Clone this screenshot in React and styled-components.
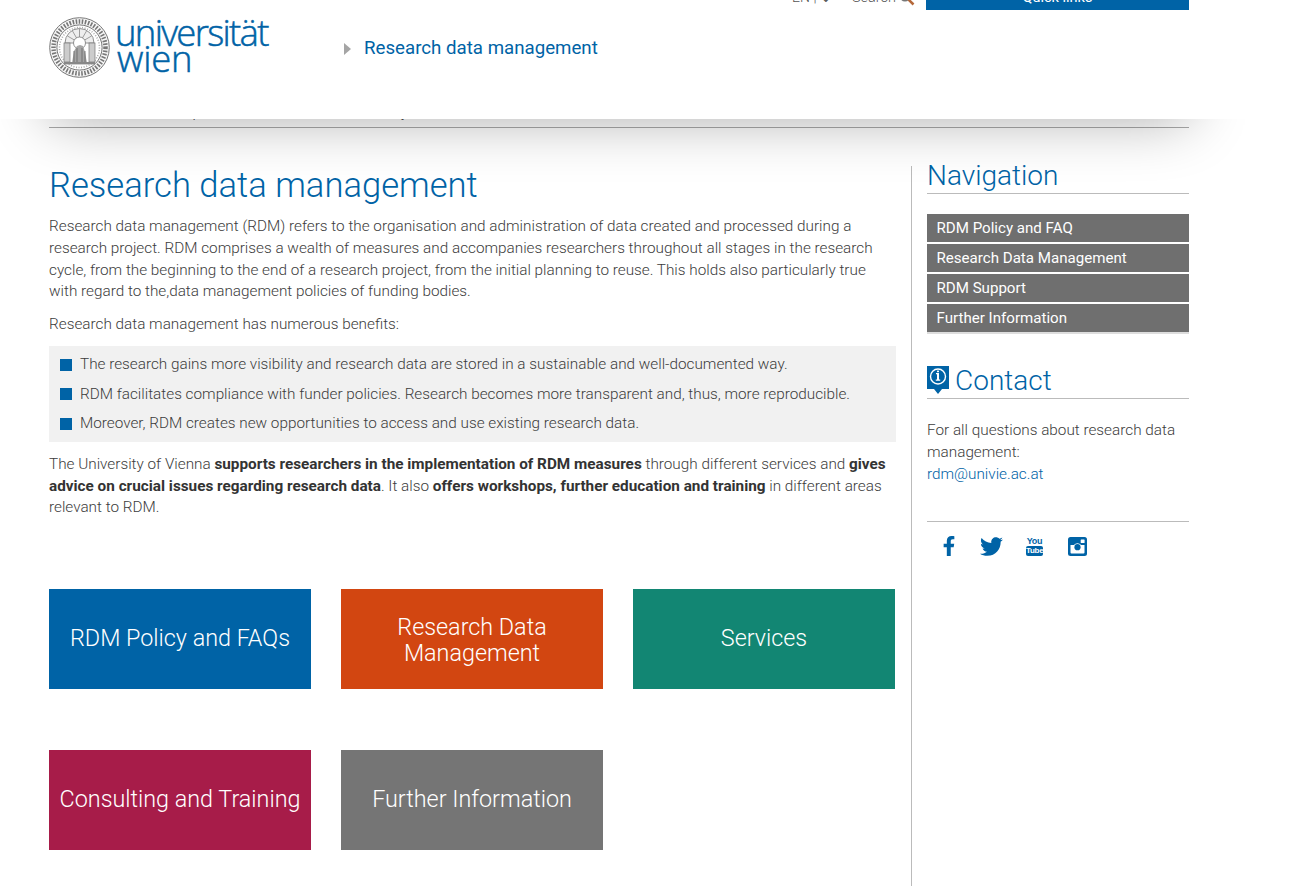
import React from "react";
import styled, { createGlobalStyle } from "styled-components";
import { FaFacebookF, FaTwitter } from "react-icons/fa";

const BLUE = "#0063a6";

const Global = createGlobalStyle`
  html, body { margin: 0; padding: 0; background: #fff; }
  body { font-family: Roboto, "Liberation Sans", sans-serif; font-weight: 300; font-size: 15.3px; line-height: 21.75px; color: #3c3c3c; overflow: hidden; }
  * { box-sizing: border-box; }
`;

const Page = styled.div`
  position: relative;
  width: 1289px;
  height: 886px;
  overflow: hidden;
`;

const Header = styled.header`
  position: absolute;
  top: 0;
  left: 0;
  width: 100%;
  height: 119px;
  z-index: 2;
  &::before {
    content: "";
    position: absolute;
    left: 49px;
    right: 100px;
    top: 0;
    height: 119px;
    box-shadow: 0 0 60px rgba(0, 0, 0, 0.33);
  }
`;

const HeaderInner = styled.div`
  position: relative;
  height: 119px;
  background: #fff;
  padding: 0 100px 0 49px;
  overflow: hidden;
`;

const TopBar = styled.div`
  display: flex;
  justify-content: flex-end;
  align-items: stretch;
  height: 30px;
  margin-top: -20px;
`;

const TopLink = styled.span`
  display: inline-flex;
  align-items: center;
  gap: 3px;
  margin-right: ${(p) => p.$gap}px;
  height: 30px;
  padding-top: 6px;
  font-size: ${(p) => p.$size}px;
  font-weight: 300;
  color: #555;
`;

const QuickLinks = styled.div`
  width: 263px;
  height: 30px;
  padding-top: 6px;
  background: ${BLUE};
  color: #fff;
  font-size: 14.5px;
  font-weight: 400;
  line-height: 30px;
  text-align: center;
  display: flex;
  align-items: center;
  justify-content: center;
`;

const Brand = styled.div`
  display: flex;
  align-items: flex-start;
  padding-top: 7px;
`;

const Seal = styled.svg`
  width: 61px;
  height: 61px;
  flex: none;
`;

const Wordmark = styled.div`
  width: 156px;
  margin-left: 5px;
  flex: none;
  font-family: "Open Sans", sans-serif;
  font-weight: 300;
  font-size: 36.5px;
  line-height: 26px;
  color: ${BLUE};
  padding-top: 2px;
  -webkit-text-stroke: 0.5px ${BLUE};
`;

const WordmarkLine = styled.div`
  padding-left: ${(p) => p.$indent || 0}px;
  letter-spacing: ${(p) => p.$spacing}px;
  white-space: nowrap;
`;

const SiteName = styled.div`
  display: flex;
  align-items: center;
  height: 28px;
  margin: 18px 0 0 73px;
  gap: 13px;
  font-size: 18.7px;
  font-weight: 400;
  color: ${BLUE};
  white-space: nowrap;
`;

const Arrow = styled.span`
  width: 0;
  height: 0;
  border-style: solid;
  border-width: 6.5px 0 6.5px 7px;
  border-color: transparent transparent transparent #a5a5a5;
`;

const Breadcrumb = styled.nav`
  margin: 0 100px 0 49px;
  height: 128px;
  padding-top: 102px;
  border-bottom: 1px solid #aaa;
  white-space: nowrap;
  color: #333;
`;

const Columns = styled.div`
  display: flex;
  padding: 37px 100px 0 49px;
`;

const Main = styled.main`
  width: 847px;
  flex: none;
`;

const Title = styled.h1`
  margin: 0;
  font-size: 34.6px;
  font-weight: 300;
  line-height: 40px;
  color: ${BLUE};
`;

const Para = styled.p`
  margin: ${(p) => p.$top || 0}px 0 0;
  width: ${(p) => p.$width || 847}px;
`;

const Strong = styled.strong`
  font-weight: 700;
  color: #333;
`;

const BulletBox = styled.ul`
  list-style: none;
  margin: 10px 0 0;
  padding: 8px 0 7px 11px;
  height: 96px;
  background: #f1f1f1;
  display: flex;
  flex-direction: column;
  gap: 8px;
`;

const Bullet = styled.li`
  display: flex;
  align-items: center;
  gap: 8px;
  white-space: nowrap;
  &::before {
    content: "";
    width: 12px;
    height: 12px;
    background: ${BLUE};
    flex: none;
  }
`;

const Tiles = styled.div`
  display: grid;
  grid-template-columns: repeat(3, 262px);
  grid-auto-rows: 100px;
  column-gap: 30px;
  row-gap: 61px;
  margin-top: 70px;
`;

const Tile = styled.a`
  display: flex;
  align-items: center;
  justify-content: center;
  text-align: center;
  padding: ${(p) => (p.$twoLines ? "1px 10px 0" : "0 10px 2px")};
  background: ${(p) => p.$bg};
  color: #fff;
  font-size: 23.35px;
  font-weight: 300;
  line-height: 26px;
`;

const Side = styled.aside`
  margin-left: 15px;
  margin-top: 1px;
  width: 278px;
  height: 720px;
  border-left: 1px solid #bbb;
  padding-left: 15px;
`;

const SideHeading = styled.h2`
  display: flex;
  align-items: flex-end;
  gap: 6px;
  margin: ${(p) => p.$top || 0}px 0 0;
  height: ${(p) => p.$h}px;
  border-bottom: 1px solid #bbb;
  font-size: 28px;
  font-weight: 300;
  line-height: 34px;
  color: ${BLUE};
`;

const ContactIcon = styled.svg`
  width: 22px;
  height: 29px;
  flex: none;
  margin-bottom: 3px;
`;

const NavList = styled.div`
  margin-top: 20px;
  display: flex;
  flex-direction: column;
  gap: 2px;
  background: #fff;
  border-bottom: 2px solid #ddd;
`;

const NavItem = styled.a`
  display: block;
  height: 28px;
  padding-left: 9.5px;
  background: #6f6f6f;
  color: #fff;
  font-size: 15.1px;
  font-weight: 400;
  line-height: 29px;
`;

const SideText = styled.p`
  margin: 21px 0 0;
`;

const MailLink = styled.a`
  color: ${BLUE};
  display: block;
`;

const Social = styled.div`
  margin-top: 36px;
  border-top: 1px solid #bbb;
  padding: 13px 0 0 12px;
  display: flex;
  align-items: center;
  color: ${BLUE};
`;

const SocialSlot = styled.span`
  width: ${(p) => p.$w}px;
  height: 22px;
  display: flex;
  align-items: center;
  font-size: ${(p) => p.$size}px;
`;

const TubeStack = styled.span`
  display: flex;
  flex-direction: column;
  align-items: center;
  width: 17px;
  font-family: "Liberation Sans", sans-serif;
  font-weight: 700;
  font-size: 9px;
  line-height: 9px;
  letter-spacing: -0.3px;
  color: ${BLUE};
`;

const TubeBadge = styled.span`
  display: block;
  width: 17px;
  height: 10px;
  border-radius: 2px;
  background: ${BLUE};
  color: #fff;
  font-size: 8px;
  text-align: center;
  line-height: 10px;
`;

function SealMark() {
  return (
    <Seal viewBox="0 0 61 61">
      <circle cx="30.5" cy="30.5" r="29.8" fill="#f6f6f6" stroke="#777" strokeWidth="1" />
      <circle cx="30.5" cy="30.5" r="26" fill="none" stroke="#777" strokeWidth="4.5" strokeDasharray="1.6 1.5" />
      <circle cx="30.5" cy="30.5" r="22.6" fill="#fff" stroke="#777" strokeWidth="1" />
      <circle cx="30.5" cy="30.5" r="20" fill="none" stroke="#aaa" strokeWidth="1.6" strokeDasharray="1 1.6" />
      <path d="M16 26a14.5 14.5 0 0 1 29 0z" fill="#eee" stroke="#777" strokeWidth=".8" />
      <path d="M30.5 26v-14M30.5 26l-7-12M30.5 26l7-12M30.5 26l-12-7M30.5 26l12-7" stroke="#888" strokeWidth=".8" />
      <circle cx="30.5" cy="26" r="6" fill="#fff" stroke="#777" strokeWidth=".8" />
      <rect x="15" y="26" width="6" height="19" fill="#ccc" stroke="#777" strokeWidth=".7" />
      <rect x="40" y="26" width="6" height="19" fill="#ccc" stroke="#777" strokeWidth=".7" />
      <path d="M23 46l2-12 3-5 3-1 3 1 2 6 2 11z" fill="#a5a5a5" />
      <path d="M25 46V34M36 46V34M28 46V31M33 46V31" stroke="#666" strokeWidth=".8" />
      <path d="M15 45h31v2.4H15z" fill="#888" />
    </Seal>
  );
}

function InstagramMark() {
  return (
    <svg width="19" height="19" viewBox="0 0 19 19">
      <rect width="19" height="19" rx="2.5" fill={BLUE} />
      <path d="M2.5 8h3.4a4.4 4.4 0 0 1 7.2 0h3.4v7.5a1 1 0 0 1-1 1H3.5a1 1 0 0 1-1-1z" fill="#fff" />
      <circle cx="9.5" cy="10.2" r="3.1" fill={BLUE} />
      <rect x="12.7" y="2.4" width="3.9" height="3.6" rx=".6" fill="#fff" />
    </svg>
  );
}

export default function App() {
  return (
    <Page>
      <Global />
      <Header>
        <HeaderInner>
          <TopBar>
            <TopLink $gap={20} $size={14}>EN | ⌄</TopLink>
            <TopLink $gap={11} $size={14.5}>
              Search
              <svg width="16" height="16" viewBox="0 0 16 16">
                <circle cx="6" cy="6" r="4.5" fill="none" stroke="#777" strokeWidth="2" />
                <path d="M9.5 9.5l5 5" stroke="#b5683a" strokeWidth="2.5" />
              </svg>
            </TopLink>
            <QuickLinks>Quick links</QuickLinks>
          </TopBar>
          <Brand>
            <SealMark />
            <Wordmark>
              <WordmarkLine $spacing={-1.7}>universität</WordmarkLine>
              <WordmarkLine $indent={2} $spacing={-0.2}>wien</WordmarkLine>
            </Wordmark>
            <SiteName>
              <Arrow />
              Research data management
            </SiteName>
          </Brand>
        </HeaderInner>
      </Header>
      <Breadcrumb>Home Research Groups · Information and Arts Library</Breadcrumb>
      <Columns>
        <Main>
          <Title>Research data management</Title>
          <Para $top={11} $width={835}>
            Research data management (RDM) refers to the organisation and administration of data created and processed during a research project. RDM comprises a wealth of measures and accompanies researchers throughout all stages in the research cycle, from the beginning to the end of a research project, from the initial planning to reuse. This holds also particularly true with regard to the,data management policies of funding bodies.
          </Para>
          <Para $top={11}>Research data management has numerous benefits:</Para>
          <BulletBox>
            <Bullet>The research gains more visibility and research data are stored in a sustainable and well-documented way.</Bullet>
            <Bullet>RDM facilitates compliance with funder policies. Research becomes more transparent and, thus, more reproducible.</Bullet>
            <Bullet>Moreover, RDM creates new opportunities to access and use existing research data.</Bullet>
          </BulletBox>
          <Para $top={12} $width={845}>
            The University of Vienna <Strong>supports researchers in the implementation of RDM measures</Strong> through different services and <Strong>gives advice on crucial issues regarding research data</Strong>. It also <Strong>offers workshops, further education and training</Strong> in different areas relevant to RDM.
          </Para>
          <Tiles>
            <Tile $bg="#0063a6">RDM Policy and FAQs</Tile>
            <Tile $bg="#d24611" $twoLines>Research Data Management</Tile>
            <Tile $bg="#128673">Services</Tile>
            <Tile $bg="#a71c49">Consulting and Training</Tile>
            <Tile $bg="#757575">Further Information</Tile>
          </Tiles>
        </Main>
        <Side>
          <SideHeading $h={28}>Navigation</SideHeading>
          <NavList>
            <NavItem>RDM Policy and FAQ</NavItem>
            <NavItem>Research Data Management</NavItem>
            <NavItem>RDM Support</NavItem>
            <NavItem>Further Information</NavItem>
          </NavList>
          <SideHeading $top={31} $h={34}>
            <ContactIcon viewBox="0 0 22 29">
              <path d="M0 0h22v23h-7l-4 5-4-5H0z" fill={BLUE} />
              <circle cx="11" cy="10.5" r="7.5" fill="none" stroke="#fff" strokeWidth="1.4" />
              <path d="M9 7h3v6.5h1.2v1.3H8.8v-1.3H10V8.2H9z" fill="#fff" />
              <rect x="10" y="4.6" width="2" height="1.6" fill="#fff" />
            </ContactIcon>
            Contact
          </SideHeading>
          <SideText>
            For all questions about research data management:
            <MailLink>rdm@univie.ac.at</MailLink>
          </SideText>
          <Social>
            <SocialSlot $w={41} $size={20}><FaFacebookF /></SocialSlot>
            <SocialSlot $w={46} $size={23}><FaTwitter /></SocialSlot>
            <SocialSlot $w={42} $size={8}>
              <TubeStack>You<TubeBadge>Tube</TubeBadge></TubeStack>
            </SocialSlot>
            <SocialSlot $w={20} $size={19}><InstagramMark /></SocialSlot>
          </Social>
        </Side>
      </Columns>
    </Page>
  );
}
